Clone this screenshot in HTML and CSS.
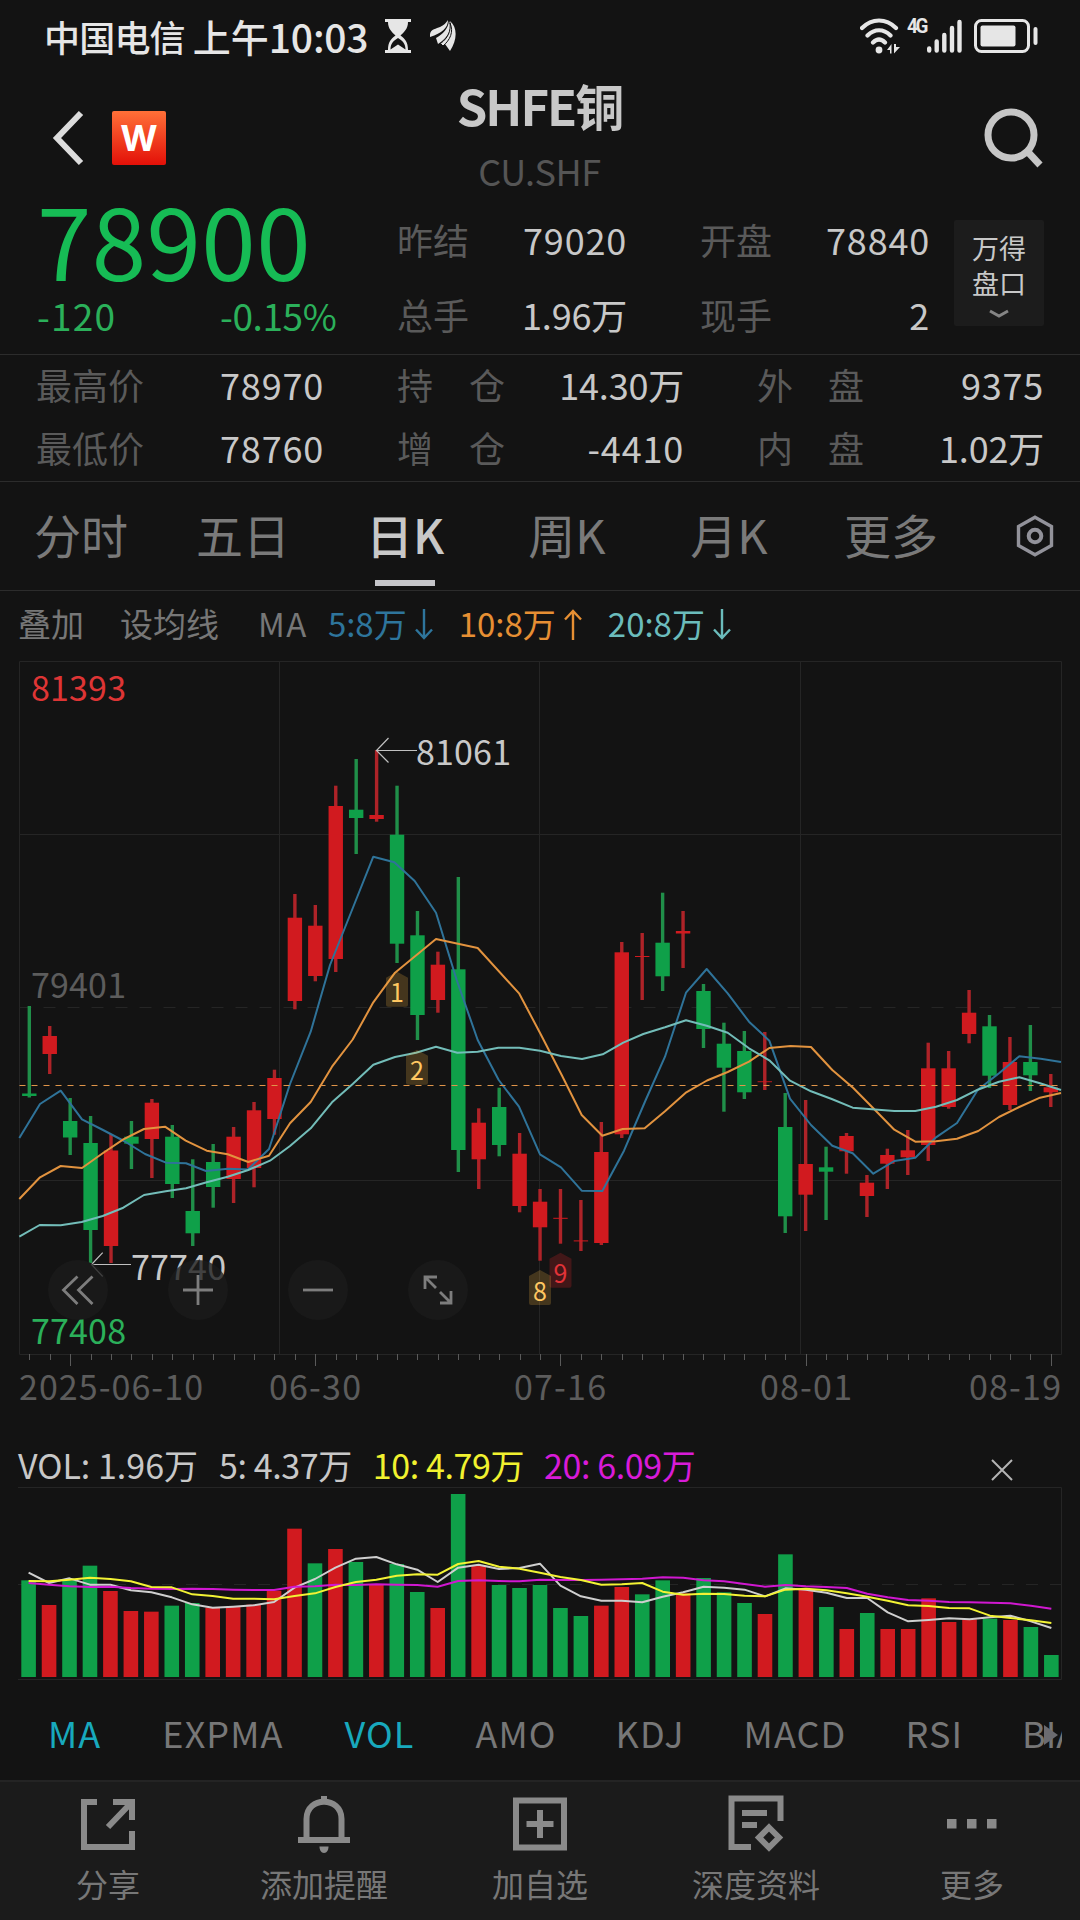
FILE: index.html
```html
<!DOCTYPE html>
<html lang="zh-CN">
<head>
    <meta charset="UTF-8">
    <meta name="viewport" content="width=device-width, initial-scale=1.0">
    <title>SHFE铜</title>
    <link rel="stylesheet" href="styles.css">
</head>
<body>

<div class="status-bar">
    <span class="carrier">中国电信</span>
    <span class="ampm">上午</span>
    <span class="clock">10:03</span>
    <svg class="icon-hourglass" width="26" height="34" viewBox="0 0 26 34" fill="#e6e6e6">
        <path d="M0 0H26V3H23C23 10 19 13 15.500 16.500C20 20 23 23 23 31H26V34H0V31H3C3 23 6 20 10.500 16.500C7 13 3 10 3 3H0Z"/>
        <path d="M5.500 30.500C5.500 24 9 21.500 13 19C17 21.500 20.500 24 20.500 30.500L13 25.500Z" fill="#131313"/>
    </svg>
    <svg class="icon-wing" width="27" height="32" viewBox="0 0 27 32" fill="#e6e6e6">
        <path d="M0 17C-1 9 6 9 10 7C14 5 16 3 18 0C18 8 12 13 0 17Z"/>
        <path d="M8 24L6 18C13 14 18 9 19 1C23 10 17 18 8 24Z"/>
        <path d="M20 31L15 24C20 19 23 10 20 1C28 8 27 20 20 31Z"/>
        <path d="M13 26L10.500 23.500C18 18 21 11 20 3C24 12 20 20 13 26Z" stroke="#131313" stroke-width="1"/>
    </svg>
    <div class="status-right">
        <svg width="40" height="36" viewBox="0 0 40 36" fill="none" stroke="#e6e6e6" stroke-width="4.200" stroke-linecap="round">
            <path d="M2 10C12 0 26 0 36 10M7.500 17.500C14.500 10.500 23.500 10.500 30.500 17.500M13 24.500C17 20.500 21 20.500 25 24.500"/>
            <circle cx="19" cy="32" r="3.400" fill="#e6e6e6" stroke="none"/>
            <path d="M27 32L31.500 26V35.500H30V32ZM34 26V35.500L40 29H36V26Z" fill="#e6e6e6" stroke="none"/>
        </svg>
        <span class="net">4G</span>
        <svg width="36" height="36" viewBox="0 0 36 36" stroke="#e6e6e6" stroke-width="4.400" stroke-linecap="round">
            <path d="M3.200 30.500V32.500M10.700 23.500V32.500M18.300 17V32.500M26 10V32.500M33.500 4V32.500"/>
        </svg>
        <svg class="icon-battery" width="64" height="34" viewBox="0 0 64 34">
            <rect x="1.500" y="1.500" width="53" height="31" rx="6" fill="none" stroke="#e6e6e6" stroke-width="3"/>
            <rect x="6.500" y="6.500" width="35" height="21" rx="2" fill="#e6e6e6"/>
            <rect x="59.500" y="8" width="4" height="18" rx="2" fill="#e6e6e6"/>
        </svg>
    </div>
</div>

<header>
    <div class="header-left">
        <svg width="32" height="56" viewBox="0 0 32 56" fill="none" stroke="#dcdcdc" stroke-width="6">
            <path d="M29 3L5 28L29 53"/>
        </svg>
        <div class="logo">W</div>
    </div>
    <div class="title">
        <h1>SHFE铜</h1>
        <div class="code">CU.SHF</div>
    </div>
    <svg class="icon-search" width="60" height="60" viewBox="0 0 60 60" fill="none" stroke="#c6c6c6" stroke-width="7">
        <circle cx="27" cy="27" r="23"/>
        <path d="M43.500 43.500L56 57"/>
    </svg>
</header>

<section class="quote">
    <div class="price-box">
        <div class="price">78900</div>
        <div class="change"><span>-120</span><span>-0.15%</span></div>
    </div>
    <div class="quote-grid">
        <span class="label">昨结</span><span class="value">79020</span>
        <span class="label">开盘</span><span class="value">78840</span>
        <span class="label">总手</span><span class="value wan">1.96万</span>
        <span class="label">现手</span><span class="value">2</span>
    </div>
    <div class="wind-box">
        <span>万得</span>
        <span>盘口</span>
        <svg width="20" height="9" viewBox="0 0 20 9" fill="none" stroke="#858585" stroke-width="3">
            <path d="M1 2L10 7L19 2"/>
        </svg>
    </div>
</section>

<section class="stats">
    <span class="label">最高价</span><span class="value">78970</span>
    <span class="label spread"><i>持</i><i>仓</i></span><span class="value wan">14.30万</span>
    <span class="label spread"><i>外</i><i>盘</i></span><span class="value">9375</span>
    <span class="label">最低价</span><span class="value">78760</span>
    <span class="label spread"><i>增</i><i>仓</i></span><span class="value">-4410</span>
    <span class="label spread"><i>内</i><i>盘</i></span><span class="value wan">1.02万</span>
</section>

<nav class="tabs">
    <div class="tab">分时</div>
    <div class="tab">五日</div>
    <div class="tab active">日K</div>
    <div class="tab">周K</div>
    <div class="tab">月K</div>
    <div class="tab">更多</div>
    <svg class="icon-setting" width="38" height="42" viewBox="0 0 38 42" fill="none" stroke="#92929a">
        <path d="M19 2.300L35.500 11.500V30.500L19 39.700L2.500 30.500V11.500Z" stroke-width="3.400"/>
        <circle cx="19" cy="21" r="6.300" stroke-width="4"/>
    </svg>
</nav>

<div class="ma-row">
    <span class="ma-add">叠加</span>
    <span class="ma-set">设均线</span>
    <span class="ma-name">MA</span>
    <span class="ma5">5:8万<svg width="18" height="31" viewBox="0 0 18 31"><path d="M9 0V29M1 20.500L9 29L17 20.500"/></svg></span>
    <span class="ma10">10:8万<svg width="18" height="31" viewBox="0 0 18 31"><path d="M9 31V2M1 10.500L9 2L17 10.500"/></svg></span>
    <span class="ma20">20:8万<svg width="18" height="31" viewBox="0 0 18 31"><path d="M9 0V29M1 20.500L9 29L17 20.500"/></svg></span>
</div>

<div class="chart-wrap">
    <svg class="chart" id="kChart" width="1080" height="750" viewBox="0 660 1080 750">
        <g class="grid">
            <path d="M19.500 661.500H1061.500V1354.500H19.500ZM279.500 661.500V1354.500M539.500 661.500V1354.500M800.500 661.500V1354.500M19.500 834.500H1061.500M19.500 1180.500H1061.500"/>
            <path d="M19.500 1007.500H1061.500" stroke-dasharray="12 12"/>
        </g>
        <g id="ticks"></g>
        <g id="candles"></g>
        <g id="maLines"></g>
        <path class="last-price" d="M19.500 1085.500H1061.500"/>

        <g class="axis-text">
            <text class="high" x="31" y="700.500" textLength="95">81393</text>
            <text x="31" y="997.500" textLength="95">79401</text>
            <text class="low" x="31" y="1343.500" textLength="95">77408</text>
            <text x="19" y="1400" textLength="184">2025-06-10</text>
            <text x="269" y="1400" textLength="92">06-30</text>
            <text x="514" y="1400" textLength="92">07-16</text>
            <text x="760" y="1400" textLength="92">08-01</text>
            <text x="969" y="1400" textLength="92">08-19</text>
        </g>

        <g class="mark">
            <path d="M417 750.500H376.500M388.500 738L376.500 750.500L388.500 762.500"/>
            <text x="416" y="765" textLength="95">81061</text>
            <path d="M131 1264.500H91.500M102.700 1252.700L91.500 1264.500L102.700 1276.500"/>
            <text x="131" y="1279.500" textLength="95">77740</text>
        </g>

        <g class="nine" id="nine"></g>
    </svg>

    <div class="chart-tools">
        <button><svg width="34" height="34" viewBox="0 0 34 34"><path d="M16.500 3.500L2.500 17L16.500 31M31.500 3.500L17.500 17L31.500 31"/></svg></button>
        <button><svg width="34" height="34" viewBox="0 0 34 34"><path d="M2 17H32M17 2V32"/></svg></button>
        <button><svg width="34" height="34" viewBox="0 0 34 34"><path d="M2 17H32"/></svg></button>
        <button><svg width="34" height="34" viewBox="0 0 34 34"><path d="M16 4H4V16M4 4L15 15M19 30H30V18M30 30L19 19"/></svg></button>
    </div>
</div>

<div class="vol-row">
    <span class="vol-now">VOL: 1.96万</span>
    <span class="vol5">5: 4.37万</span>
    <span class="vol10">10: 4.79万</span>
    <span class="vol20">20: 6.09万</span>
    <svg class="icon-close" width="22" height="22" viewBox="0 0 22 22" fill="none" stroke="#b4b4b4" stroke-width="2">
        <path d="M1 1L21 21M21 1L1 21"/>
    </svg>
</div>

<svg class="chart" id="volChart" width="1080" height="194" viewBox="0 57 1080 194">
    <g class="grid">
        <path d="M18 57.500H1061.500V249.500H18"/>
        <path d="M18 154.500H1061.500" stroke-dasharray="12 12"/>
    </g>
    <g id="volBars"></g>
    <g id="volLines"></g>
</svg>

<div class="indicators">
    <span class="active">MA</span>
    <span>EXPMA</span>
    <span class="active">VOL</span>
    <span>AMO</span>
    <span>KDJ</span>
    <span>MACD</span>
    <span>RSI</span>
    <span class="last">BIAS</span>
    <svg class="icon-more" width="14" height="20" viewBox="0 0 14 20"><path d="M0 0L14 10L0 20Z" fill="#6b6b70"/></svg>
</div>

<footer>
    <div class="action">
        <svg width="60" height="60" viewBox="0 0 60 60">
            <path d="M19 9H6V54H54V38M35 9H54V27M53 10L30 34"/>
        </svg>
        <span>分享</span>
    </div>
    <div class="action">
        <svg width="60" height="60" viewBox="0 0 60 60">
            <path d="M30 3V10M12.500 46V26C12.500 3 47.500 3 47.500 26V46M4 47H56"/>
            <path d="M25.500 53.500H34.500C34.500 57 33 60 30 60C27 60 25.500 57 25.500 53.500Z" fill="#8a8a8a" stroke="none"/>
        </svg>
        <span>添加提醒</span>
    </div>
    <div class="action">
        <svg width="60" height="60" viewBox="0 0 60 60">
            <path d="M6 7.500H54V54.500H6ZM30 17V45M16.500 31H43.500"/>
        </svg>
        <span>加自选</span>
    </div>
    <div class="action">
        <svg width="60" height="60" viewBox="0 0 60 60">
            <path d="M25 54H5.500V5.500H54.500V28M16 20H41M16 32H31"/>
            <path d="M43 34.500L53 44.500L43 54.500L33 44.500Z"/>
        </svg>
        <span>深度资料</span>
    </div>
    <div class="action">
        <svg width="60" height="60" viewBox="0 0 60 60">
            <path d="M5 26H14.500V35.500H5ZM25 26H34.500V35.500H25ZM45 26H54.500V35.500H45Z" fill="#8a8a8a" stroke="none"/>
        </svg>
        <span>更多</span>
    </div>
</footer>

<script src="chart.js"></script>
</body>
</html>
```
FILE: styles.css
```css
* {
    box-sizing: border-box;
}
body {
    margin: 0;
    width: 1080px;
    height: 1920px;
    overflow: hidden;
    background: #131313;
    color: #c8c8c8;
    font-family: "Noto Sans CJK SC", "Noto Sans", sans-serif;
    font-size: 36px;
}
svg {
    display: block;
    flex: none;
}
span {
    white-space: nowrap;
}

/* status bar */
.status-bar {
    display: flex;
    align-items: center;
    height: 76px;
    padding: 0 42px 4px 44px;
    color: #e6e6e6;
    font-size: 36px;
    font-weight: 500;
    line-height: 72px;
}
.carrier {
    letter-spacing: -0.8px;
    margin-right: 8px;
}
.ampm {
    font-size: 38px;
}
.clock {
    font-size: 39px;
    letter-spacing: -0.2px;
}
.icon-hourglass {
    margin-left: 17px;
}
.icon-wing {
    margin-left: 19px;
}
.status-right {
    display: flex;
    margin-left: auto;
}
.net {
    width: 19px;
    margin-right: 1px;
    margin-left: 6px;
    font-family: Roboto, sans-serif;
    font-size: 21px;
    font-weight: 700;
    line-height: 17px;
    letter-spacing: -2.5px;
    transform: scaleX(0.9);
}
.icon-battery {
    margin-left: 12px;
    margin-top: 1px;
}

/* header */
header {
    display: grid;
    grid-template-columns: 1fr 1fr 1fr;
    height: 125px;
    padding: 0 36px 0 52px;
}
.header-left {
    display: flex;
    align-items: center;
    gap: 28px;
    margin-bottom: 7px;
}
.logo {
    width: 54px;
    height: 54px;
    border-radius: 2px;
    background: linear-gradient(#ff7038, #e31008);
    color: #fff;
    font-family: Inter, sans-serif;
    font-size: 36px;
    font-weight: 700;
    line-height: 54px;
    text-align: center;
}
.title {
    text-align: center;
    margin: 1px 17px 0 0;
}
.title h1 {
    margin: 0;
    font-size: 49px;
    font-weight: 700;
    line-height: 56px;
    letter-spacing: -2px;
}
.code {
    color: #555;
    line-height: 74px;
    letter-spacing: -0.5px;
}
.icon-search {
    justify-self: end;
    align-self: center;
    margin-bottom: 7px;
}

/* quote */
.quote {
    display: flex;
    height: 154px;
    border-bottom: 1px solid #2c2c2c;
    line-height: 77px;
}
.price-box {
    width: 398px;
    padding-left: 37px;
    color: #2bb05a;
}
.price {
    font-size: 98px;
    line-height: 74px;
    letter-spacing: 0.4px;
    color: #16bc55;
}
.change {
    display: flex;
    font-size: 37px;
    line-height: 80px;
    letter-spacing: -0.4px;
}
.change span:first-child {
    width: 183px;
    letter-spacing: 1.2px;
}
.quote-grid {
    display: grid;
    grid-template-columns: 70px 160px 142px 161px;
    grid-auto-rows: 75px;
    height: 150px;
    margin-left: -1px;
}
.quote-grid .label:nth-child(4n+3) {
    padding-left: 73px;
}
.label {
    color: #5a5a5a;
}
.value {
    text-align: right;
    letter-spacing: 0.8px;
}
.value.wan {
    letter-spacing: -0.2px;
}
.wind-box {
    display: flex;
    flex-direction: column;
    align-items: center;
    width: 90px;
    height: 106px;
    margin: 19px 0 0 24px;
    padding-top: 10px;
    background: #1c1c1c;
    border-radius: 2px;
    font-size: 27px;
    line-height: 35px;
}
.wind-box svg {
    margin-top: 9px;
}

/* high / low / positions */
.stats {
    display: grid;
    grid-template-columns: 107px 181px 181px 179px 180px 180px;
    height: 127px;
    padding: 0 36px;
    border-bottom: 1px solid #2c2c2c;
    line-height: 59px;
}
.stats .spread {
    display: flex;
    justify-content: space-between;
    padding-left: 73px;
}
.stats i {
    font-style: normal;
}

/* period tabs */
.tabs {
    display: flex;
    align-items: center;
    height: 109px;
    border-bottom: 1px solid #2c2c2c;
    color: #7a7a7a;
    font-size: 47px;
}
.tab {
    position: relative;
    width: 162px;
    height: 108px;
    line-height: 103px;
    text-align: center;
}
.tab.active {
    color: #c8c8c8;
    font-weight: 500;
}
.tab.active::after {
    content: "";
    position: absolute;
    left: 51px;
    bottom: 4px;
    width: 60px;
    height: 6px;
    background: #c5c5c9;
}
.icon-setting {
    margin-left: 44px;
}

/* moving average row */
.ma-row {
    display: flex;
    height: 69px;
    padding-left: 18px;
    line-height: 65px;
    font-size: 33px;
    color: #777;
}
.ma-row span {
    display: flex;
    align-items: center;
    height: 65px;
}
.ma-row svg {
    margin-left: 8px;
    margin-top: 1px;
    fill: none;
    stroke: currentColor;
    stroke-width: 2.4;
}
.ma-set {
    margin-left: 36px;
}
.ma-name {
    margin-left: 39px;
    letter-spacing: 1.5px;
}
.ma5 {
    margin-left: 20px;
    color: #2e759c;
}
.ma10 {
    margin-left: 26px;
    color: #e68f33;
}
.ma20 {
    margin-left: 26px;
    color: #6bbcbc;
}

/* charts */
.chart-wrap {
    position: relative;
}
.grid {
    fill: none;
    stroke: #252525;
    stroke-width: 1;
}
.tick {
    stroke: #5a5a5a;
    stroke-width: 1;
}
.up {
    fill: #d11a1f;
}
.down {
    fill: #0fa049;
}
.up .wick {
    fill: #ae2328;
}
.down .wick {
    fill: #208f49;
}
.line {
    fill: none;
    stroke-width: 2;
    stroke-linejoin: round;
}
.line-ma5 {
    stroke: #2f7399;
}
.line-ma10 {
    stroke: #e2933f;
}
.line-ma20 {
    stroke: #73bdb9;
}
.line-vol5 {
    stroke: #cfcfcf;
}
.line-vol10 {
    stroke: #f3f334;
}
.line-vol20 {
    stroke: #d018d0;
}
.last-price {
    stroke: #e0954a;
    stroke-width: 1.2;
    stroke-dasharray: 6 6;
}
.axis-text text {
    font-size: 34px;
    fill: #5c5c5c;
}
.axis-text .high {
    fill: #de3535;
}
.axis-text .low {
    fill: #2bb05a;
}
.mark path {
    fill: none;
    stroke: #c0c0c0;
    stroke-width: 1.2;
}
.mark text {
    font-size: 34px;
    fill: #c8c8c8;
}
.nine text {
    font-size: 25px;
    text-anchor: middle;
    fill: #ffc761;
}
.nine path {
    fill: rgba(255, 190, 70, 0.21);
}
.nine .hot path {
    fill: rgba(225, 40, 45, 0.23);
}
.nine .hot text {
    fill: #e23338;
}
.chart-tools {
    position: absolute;
    left: 48px;
    top: 600px;
    display: flex;
    gap: 60px;
}
.chart-tools button {
    display: flex;
    align-items: center;
    justify-content: center;
    width: 60px;
    height: 60px;
    padding: 0;
    border: none;
    border-radius: 50%;
    background: rgba(27, 27, 27, 0.78);
}
.chart-tools svg {
    fill: none;
    stroke: #7d7d7d;
    stroke-width: 2.8;
}

/* volume */
.vol-row {
    display: flex;
    height: 77px;
    padding-left: 18px;
    font-size: 34px;
    line-height: 110px;
    letter-spacing: -0.4px;
}
.vol-row span {
    white-space: pre;
}
.vol-now {
    letter-spacing: 0;
}
.vol5 {
    margin-left: 21px;
}
.vol10 {
    margin-left: 21px;
    color: #f1f12f;
}
.vol20 {
    margin-left: 20px;
    color: #d81bd8;
}
.icon-close {
    margin: 49px 67px 0 auto;
}

/* indicator list */
.indicators {
    position: relative;
    display: flex;
    gap: 61px;
    width: 1062px;
    height: 99px;
    padding-left: 48px;
    overflow: hidden;
    line-height: 103px;
    letter-spacing: 1.1px;
    color: #777;
}
.indicators .active {
    color: #18a9bd;
}
.indicators span:nth-child(n+5) {
    margin-left: -2px;
}
.indicators .last {
    margin-left: -5px;
    letter-spacing: 0;
}
.icon-more {
    position: absolute;
    right: 4px;
    top: 44px;
}

/* bottom actions */
footer {
    display: grid;
    grid-template-columns: repeat(5, 1fr);
    height: 140px;
    border-top: 2px solid #242424;
    background: #1b1b1b;
    color: #777;
    font-size: 32px;
}
.action {
    display: flex;
    flex-direction: column;
    align-items: center;
    padding-top: 11px;
}
.action svg {
    fill: none;
    stroke: #8a8a8a;
    stroke-width: 6;
}
.action span {
    line-height: 60px;
}
```
FILE: chart.js
```js
const START_X = 29.3;
const STEP = 20.43;
const BODY = 14.4;

// [up/down, high, body top, body bottom, low]
const candles = [
    ['d', 1006, 1093.5, 1096, 1097.5], ['u', 1026, 1036, 1054, 1074], ['d', 1098, 1121, 1137.5, 1155],
    ['d', 1116, 1143, 1230, 1263], ['u', 1134, 1150.5, 1246, 1263], ['d', 1121, 1136.7, 1143.7, 1169],
    ['u', 1099, 1102.7, 1139, 1178], ['d', 1125, 1136.7, 1184, 1198], ['d', 1159.3, 1211, 1233.3, 1246],
    ['d', 1144, 1162, 1187, 1207.7], ['u', 1127, 1136.7, 1179, 1203], ['u', 1102, 1110.3, 1168, 1187.3],
    ['u', 1069.7, 1078, 1119, 1134.7], ['u', 894, 917.7, 1001, 1009.3], ['u', 905, 925.7, 976, 981.3],
    ['u', 785.7, 806, 959, 972], ['d', 759, 809.7, 818, 854], ['u', 750, 815, 819, 821.7],
    ['d', 785.7, 834.7, 943.7, 963], ['d', 911, 935.3, 1015, 1040], ['u', 951.7, 964.7, 1000, 1012.7],
    ['d', 877, 969.3, 1150, 1172], ['u', 1108.3, 1122.7, 1159.3, 1189], ['d', 1087.7, 1107, 1145, 1156.3],
    ['u', 1133, 1153.7, 1206, 1212.3], ['u', 1189, 1201.7, 1227.3, 1260.7], ['u', 1189, 1217.8, 1218.8, 1243.7],
    ['u', 1200, 1240.4, 1241.4, 1251], ['u', 1122, 1152, 1243, 1245], ['u', 942, 952.3, 1134.3, 1138],
    ['u', 933, 956, 957, 1000], ['d', 892.7, 942.7, 976.3, 991], ['u', 911, 931, 933.5, 968],
    ['d', 984, 991, 1029, 1048], ['d', 1022.7, 1043.7, 1067.7, 1111.7], ['d', 1031, 1051, 1092.3, 1099],
    ['u', 1032, 1081.3, 1082.2, 1090], ['d', 1093, 1127, 1216.3, 1233], ['u', 1100, 1164, 1194.7, 1231],
    ['d', 1146.7, 1167.3, 1171.7, 1220], ['u', 1133, 1136, 1151.3, 1173.7], ['u', 1175, 1182.7, 1196, 1217],
    ['u', 1148.7, 1155, 1163.7, 1189], ['u', 1130, 1150.3, 1157.3, 1175], ['u', 1042.7, 1068.3, 1145, 1161],
    ['u', 1051, 1068.3, 1107, 1108.7], ['u', 990, 1012.7, 1034, 1043.3], ['d', 1015, 1026.3, 1075.7, 1088],
    ['u', 1037, 1062, 1105, 1110], ['d', 1025, 1062, 1075.3, 1091], ['u', 1074, 1087.3, 1092.3, 1107]
];

const ma = {
    ma5: '19.3,1138 40,1104 60.7,1090.7 82,1119.3 103,1130 124,1141 145,1154 166,1162.7 186,1163.3 206,1171 228,1168.7 248,1169.5 269,1149 290,1084 310.7,1031.7 330,965 354,905 373.3,856.7 394.3,862.3 414.7,881 436,912.7 456.7,980 477.7,1040 498.7,1080 519,1106.7 540,1154.3 561,1167.3 581.7,1190.7 602.3,1191 624,1150.7 645.7,1100 665,1056.7 686,992.7 706.7,969 727.7,993.3 749,1021.7 769.3,1040.7 790,1098.7 811,1125 832.3,1145.7 852.7,1153.3 873.3,1173.7 894.3,1161 915.3,1157.7 936,1137.3 957,1123 977.7,1090 999,1073.3 1019.3,1056.3 1040.7,1058.7 1061,1062',
    ma10: '19.3,1199 40,1177.3 60.7,1166 82,1168 102.7,1153.3 123.3,1139.3 144,1129 165,1126.7 185.7,1140.7 206.7,1150.7 227.7,1154.3 248.3,1162 269,1155.7 290,1123.3 310.7,1102 332,1066.7 352.7,1039.5 373.3,1002.3 395,972.7 436,939 477.7,948 519.3,993.7 540.7,1034.3 561.7,1075 581.7,1115 602.3,1135.7 622.7,1129 644.7,1128.3 665,1111.3 686.3,1092.3 707,1080.5 727.7,1072 749,1061.7 769.3,1048 790.7,1046 811,1047 832.3,1070 853.3,1088 873.3,1108.3 894.3,1129.7 915.3,1141.7 936,1141.3 957,1138.7 978.3,1131 999,1117 1019.3,1107 1040,1097.7 1061,1093',
    ma20: '19.3,1236.7 39.7,1225 60.7,1225.3 81.7,1222 102.7,1216 123.3,1207.7 144,1195 165.7,1191.3 186,1188.3 206.7,1182.3 227.7,1176.7 248.3,1170 270,1160.7 290,1146 310.7,1128.3 332,1102.3 352.7,1084 373.3,1064.7 395,1057 416,1052.7 436,1046.7 457.3,1052.7 477.7,1051.7 498.3,1047.7 519.3,1047.7 540,1050.7 561,1056 582,1059 602.7,1054.3 623.3,1042.7 643.3,1034 665,1027.3 686,1020.3 706.7,1025.7 727.7,1032.7 749,1048.3 769.3,1060.3 790,1080.7 811,1091.3 831.7,1099 852.7,1107.7 894.3,1111 915.3,1111 936,1106.7 957,1100 977.7,1089.7 999,1081.7 1019.3,1077.3 1040,1083.3 1061,1090'
};

// TD sequence marks: [x, top, number]
const nine = [[397, 971.7, 1], [417, 1049.7, 2], [560.5, 1252.7, 9], [540, 1270, 8]];

// volume values are in 1/3 px, bars end at 741
const VOL_BASE = 741;
const volTops = [451, 525, 451, 407, 483, 543, 545, 527, 519, 533, 529, 524, 482, 296, 400, 357, 396,
    462, 402, 486, 534, 192, 406, 465, 474, 465, 534, 558, 527, 471, 493, 451, 490, 444, 487, 519,
    552, 373, 480, 531, 597, 549, 597, 597, 505, 576, 568, 566, 570, 591, 675];
const volDown = [0, 2, 3, 7, 8, 14, 16, 18, 19, 21, 23, 24, 25, 26, 27, 30, 31, 33, 34, 35, 37, 39, 41, 47, 49, 50];
const volMa = {
    vol5: [428, 459, 445, 464, 464, 481, 487, 502, 523, 533, 530, 526, 516, 473, 447, 413, 386, 381, 403,
        419, 456, 413, 404, 417, 414, 401, 467, 499, 512, 512, 517, 500, 487, 470, 473, 479, 499, 475,
        479, 488, 504, 504, 547, 574, 570, 565, 568, 562, 557, 574, 594],
    vol20: [459, 464, 469, 471, 470, 474, 476, 477, 476, 477, 479, 480, 480, 470, 469, 464, 465, 463, 464,
        465, 470, 453, 451, 453, 454, 449, 450, 450, 449, 448, 446, 442, 443, 451, 454, 462, 470, 465,
        469, 471, 474, 491, 502, 510, 512, 516, 517, 518, 520, 527, 536],
    vol10: [453, 454, 449, 443, 447, 454, 471, 472, 493, 498, 506, 506, 508, 498, 490, 471, 456, 449, 437,
        433, 434, 402, 393, 410, 416, 428, 441, 450, 464, 463, 459, 485, 494, 491, 492, 497, 499, 479,
        476, 481, 490, 500, 512, 526, 528, 534, 535, 557, 564, 571, 579]
};

function rect(x, y, w, h, cls) {
    return `<rect class="${cls || ''}" x="${x}" y="${y}" width="${w}" height="${h}"/>`;
}

function drawCandles() {
    let html = '';
    let ticks = '';
    candles.forEach(([dir, high, top, bottom, low], i) => {
        const x = START_X + i * STEP;
        html += `<g class="${dir === 'u' ? 'up' : 'down'}">`;
        html += rect(x - 1.7, high, 3.4, low - high, 'wick');
        html += rect(x - BODY / 2, top, BODY, bottom - top);
        html += '</g>';

        const tx = Math.round(x) + 0.5;
        ticks += `<path class="tick" d="M${tx} 1354V${i % 12 === 2 ? 1366 : 1360}"/>`;
    });
    document.getElementById('candles').innerHTML = html;
    document.getElementById('ticks').innerHTML = ticks;
}

function drawLines() {
    document.getElementById('maLines').innerHTML = Object.keys(ma)
        .map(name => `<polyline class="line line-${name}" points="${ma[name]}"/>`).join('');
}

function drawNine() {
    document.getElementById('nine').innerHTML = nine.map(([x, y, n]) => `
        <g class="${n === 9 ? 'hot' : ''}">
            <path d="M${x} ${y}L${x + 11} ${y + 6}V${y + 33}Q${x + 11} ${y + 35} ${x + 9} ${y + 35}H${x - 9}Q${x - 11} ${y + 35} ${x - 11} ${y + 33}V${y + 6}Z"/>
            <text x="${x}" y="${y + 30.500}">${n}</text>
        </g>`).join('');
}

function drawVolume() {
    const x = i => 28.6 + i * 20.455;
    document.getElementById('volBars').innerHTML = volTops.map((top, i) =>
        rect(x(i) - 7.3, top / 3, 14.6, (VOL_BASE - top) / 3, volDown.includes(i) ? 'down' : 'up')).join('');
    document.getElementById('volLines').innerHTML = Object.keys(volMa).map(name => {
        const points = volMa[name].map((v, i) => `${x(i)},${v / 3}`).join(' ');
        return `<polyline class="line line-${name}" points="${points}"/>`;
    }).join('');
}

drawCandles();
drawLines();
drawNine();
drawVolume();
```
